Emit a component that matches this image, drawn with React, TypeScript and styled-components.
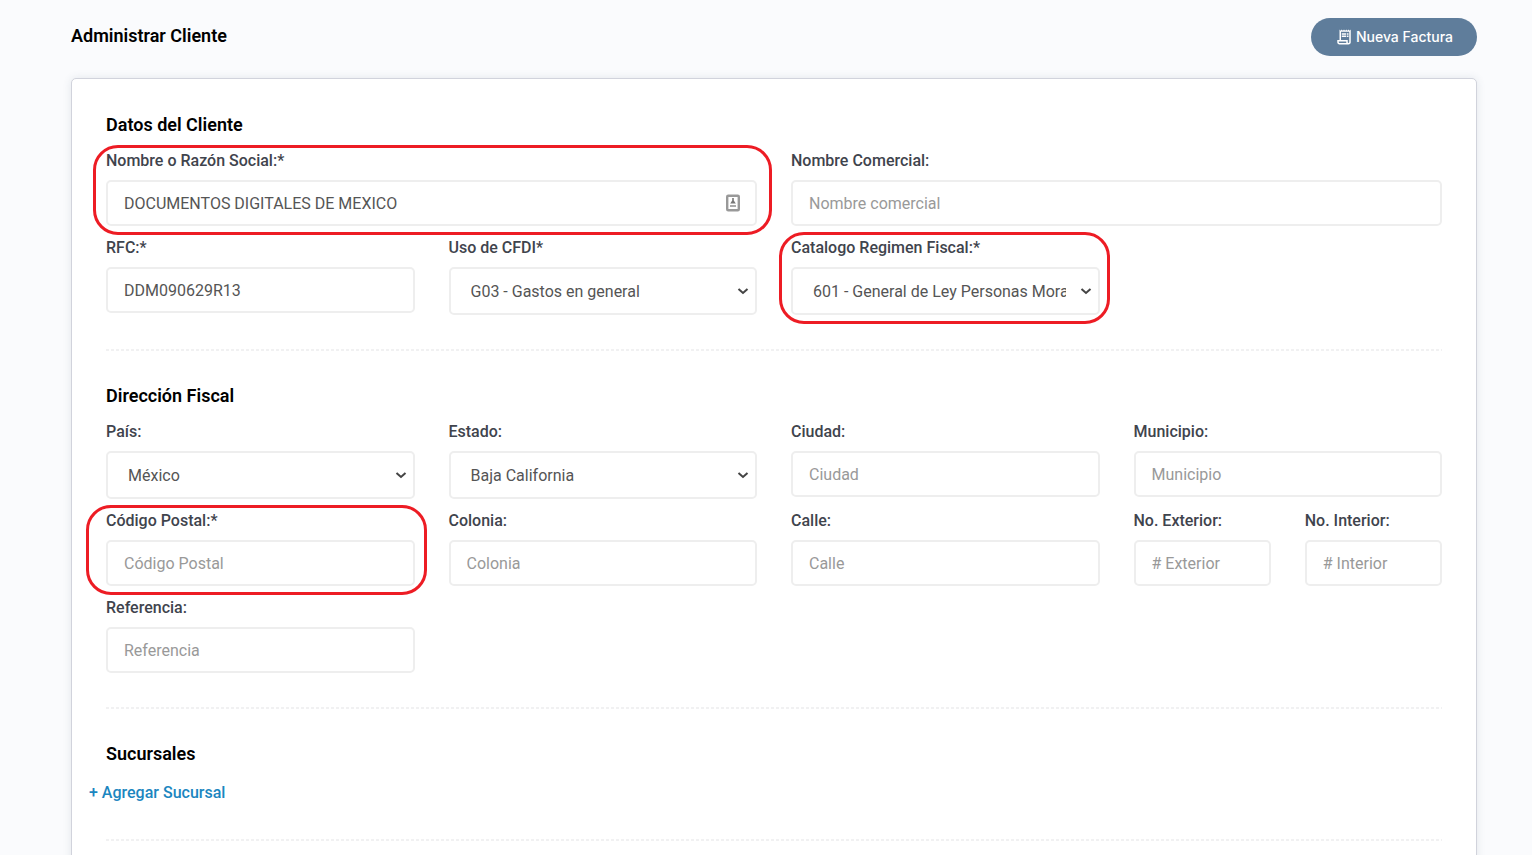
import React from "react";
import styled, { createGlobalStyle, css } from "styled-components";
import { MdOutlineReceiptLong } from "react-icons/md";

const GlobalStyle = createGlobalStyle`
  *, *::before, *::after { box-sizing: border-box; }
  body {
    margin: 0;
    background: #fafbfd;
    color: #000;
    font-family: Roboto, "Liberation Sans", sans-serif;
    font-size: 16px;
    line-height: 24px;
  }
`;

const Page = styled.main`
  display: flex;
  flex-direction: column;
  padding: 18px 55px 0 71px;
  height: 100vh;
  overflow: hidden;
`;

const Header = styled.header`
  display: flex;
  justify-content: space-between;
  align-items: center;
  margin-bottom: 22px;
`;

const Title = styled.h1`
  margin: 0 0 2px;
  font-size: 18px;
  line-height: 24px;
  font-weight: 600;
`;

const InvoiceButton = styled.button`
  display: flex;
  align-items: center;
  justify-content: center;
  gap: 3px;
  height: 38px;
  padding: 0 24px 2px;
  border: 0;
  border-radius: 19px;
  background: #5f7d9b;
  color: #fff;
  font-family: Inter, sans-serif;
  font-size: 14px;
  font-weight: 500;
  cursor: pointer;

  svg {
    margin-top: 2px;
  }
`;

const Card = styled.form`
  flex: 1 0 auto;
  padding: 34px 34px 0;
  border: 1px solid #d1d3dc;
  border-radius: 5px;
  background: #fff;
  box-shadow: 0 0 8px rgba(60, 80, 110, 0.12);
`;

const Section = styled.section`
  padding-bottom: 36px;
  margin-bottom: 33px;
  background: repeating-linear-gradient(90deg, #f1f1f2 0 3px, transparent 3px 5px) left bottom / 100% 2px no-repeat;
`;

const SectionTitle = styled.h2<{ $gap: number }>`
  margin: 0 0 ${(p) => p.$gap}px;
  font-size: 18px;
  line-height: 24px;
  font-weight: 600;
`;

const Grid = styled.div`
  display: grid;
  grid-template-columns: repeat(4, minmax(0, 1fr));
  column-gap: 34px;
  row-gap: 10px;
  align-items: start;
`;

const Pair = styled.div`
  display: grid;
  grid-template-columns: repeat(2, minmax(0, 1fr));
  column-gap: 34px;
`;

type Mark = { left: number; right: number };

const FieldBox = styled.div<{ $span: number; $mark?: Mark }>`
  position: relative;
  display: flex;
  flex-direction: column;
  gap: 7px;
  grid-column: span ${(p) => p.$span};

  ${(p) =>
    p.$mark &&
    css`
      &::after {
        content: "";
        position: absolute;
        top: -4px;
        bottom: -9px;
        left: -${p.$mark.left}px;
        right: -${p.$mark.right}px;
        border: 3px solid #ed1c24;
        border-radius: 25px;
        pointer-events: none;
      }
    `}
`;

const Label = styled.label`
  color: #3f444d;
  font-weight: 500;
`;

const control = css`
  width: 100%;
  border: 2px solid #eee;
  border-radius: 5px;
  background: #fff;
  color: #555;
  font-family: inherit;
  font-size: 16px;
  font-weight: 400;
  outline: 0;
`;

const Input = styled.input`
  ${control}
  height: 46px;
  padding: 0 16px;

  &::placeholder {
    color: #999;
    opacity: 1;
  }
`;

const Select = styled.select`
  ${control}
  appearance: none;
  height: 48px;
  padding: 0 32px 0 20px;
  text-overflow: clip;
`;

const ControlWrap = styled.div`
  position: relative;
  display: flex;
`;

const AutofillIcon = styled.svg`
  position: absolute;
  top: 14px;
  right: 17px;
`;

const Chevron = styled.svg`
  position: absolute;
  top: 20px;
  right: 8px;
  pointer-events: none;
`;

const Actions = styled.div`
  margin: 0 -17px;
`;

const AddLink = styled.a`
  color: #1b86c0;
  font-weight: 500;
  text-decoration: none;
`;

type FieldProps = {
  id: string;
  label: string;
  span?: number;
  mark?: Mark;
  placeholder?: string;
  value?: string;
  options?: string[];
  autofill?: boolean;
};

function Field({ id, label, span = 1, mark, placeholder, value, options, autofill }: FieldProps) {
  return (
    <FieldBox $span={span} $mark={mark}>
      <Label htmlFor={id}>{label}</Label>
      <ControlWrap>
        {options ? (
          <>
            <Select id={id} defaultValue={options[0]}>
              {options.map((o) => (
                <option key={o}>{o}</option>
              ))}
            </Select>
            <Chevron width="12" height="8" viewBox="0 0 12 8" aria-hidden="true">
              <path d="M1.5 2 6 6l4.5-4" fill="none" stroke="#444" strokeWidth="2" />
            </Chevron>
          </>
        ) : (
          <Input id={id} type="text" placeholder={placeholder} defaultValue={value} />
        )}
        {autofill && (
          <AutofillIcon width="14" height="18" viewBox="0 0 14 18" aria-hidden="true">
            <rect x="1.2" y="1.7" width="11.6" height="14.6" rx="1" fill="#fff" stroke="#999" strokeWidth="2.4" />
            <path d="M6.2 4h1.6v2.5l2 3H4.2l2-3z" fill="#777" />
            <path d="M4 12h6" stroke="#aaa" strokeWidth="2" />
          </AutofillIcon>
        )}
      </ControlWrap>
    </FieldBox>
  );
}

export default function App() {
  return (
    <>
      <GlobalStyle />
      <Page>
        <Header>
          <Title>Administrar Cliente</Title>
          <InvoiceButton type="button">
            <MdOutlineReceiptLong size={18} aria-hidden="true" />
            Nueva Factura
          </InvoiceButton>
        </Header>
        <Card>
          <Section>
            <SectionTitle $gap={12}>Datos del Cliente</SectionTitle>
            <Grid>
              <Field
                id="razon"
                label="Nombre o Razón Social:*"
                span={2}
                mark={{ left: 13, right: 15 }}
                value="DOCUMENTOS DIGITALES DE MEXICO"
                autofill
              />
              <Field id="comercial" label="Nombre Comercial:" span={2} placeholder="Nombre comercial" />
              <Field id="rfc" label="RFC:*" value="DDM090629R13" />
              <Field id="uso" label="Uso de CFDI*" options={["G03 - Gastos en general"]} />
              <Field
                id="regimen"
                label="Catalogo Regimen Fiscal:*"
                mark={{ left: 12, right: 10 }}
                options={["601 - General de Ley Personas Morales"]}
              />
            </Grid>
          </Section>
          <Section>
            <SectionTitle $gap={12}>Dirección Fiscal</SectionTitle>
            <Grid>
              <Field id="pais" label="País:" options={["México"]} />
              <Field id="estado" label="Estado:" options={["Baja California"]} />
              <Field id="ciudad" label="Ciudad:" placeholder="Ciudad" />
              <Field id="municipio" label="Municipio:" placeholder="Municipio" />
              <Field id="cp" label="Código Postal:*" mark={{ left: 20, right: 12 }} placeholder="Código Postal" />
              <Field id="colonia" label="Colonia:" placeholder="Colonia" />
              <Field id="calle" label="Calle:" placeholder="Calle" />
              <Pair>
                <Field id="exterior" label="No. Exterior:" placeholder="# Exterior" />
                <Field id="interior" label="No. Interior:" placeholder="# Interior" />
              </Pair>
              <Field id="referencia" label="Referencia:" placeholder="Referencia" />
            </Grid>
          </Section>
          <Section>
            <SectionTitle $gap={15}>Sucursales</SectionTitle>
            <Actions>
              <AddLink href="#agregar-sucursal">+ Agregar Sucursal</AddLink>
            </Actions>
          </Section>
        </Card>
      </Page>
    </>
  );
}
